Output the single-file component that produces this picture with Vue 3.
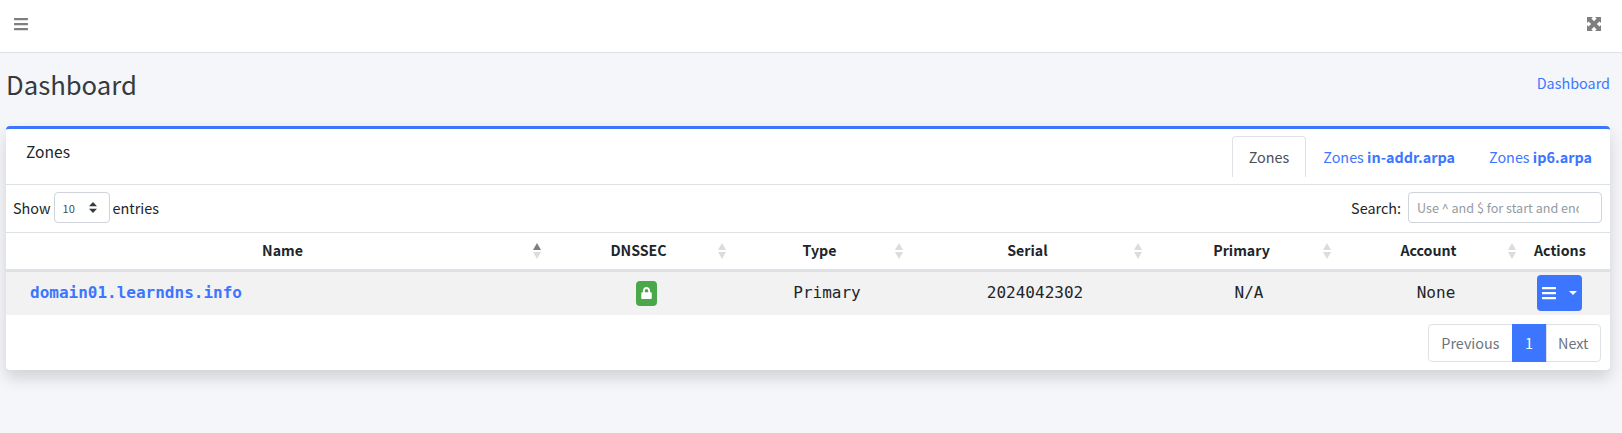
<script setup>
const columns = [
  { name: 'Name', width: 541, sort: 'asc' },
  { name: 'DNSSEC', width: 185 },
  { name: 'Type', width: 177 },
  { name: 'Serial', width: 239 },
  { name: 'Primary', width: 189 },
  { name: 'Account', width: 185 },
  { name: 'Actions', width: 88, fixed: true },
]
</script>

<template>
  <div class="page">
    <nav class="navbar">
      <svg class="nav-icon" viewBox="0 0 448 512" aria-hidden="true"><path d="M16 132h416c8.800 0 16-7.200 16-16V76c0-8.800-7.200-16-16-16H16C7.200 60 0 67.200 0 76v40c0 8.800 7.200 16 16 16zm0 160h416c8.800 0 16-7.200 16-16v-40c0-8.800-7.200-16-16-16H16c-8.800 0-16 7.200-16 16v40c0 8.800 7.200 16 16 16zm0 160h416c8.800 0 16-7.200 16-16v-40c0-8.800-7.200-16-16-16H16c-8.800 0-16 7.200-16 16v40c0 8.800 7.200 16 16 16z"/></svg>
      <svg class="nav-icon expand" viewBox="0 0 14 14" aria-hidden="true"><path d="M0 0h6L4.400 1.600 7 4.200 9.600 1.600 8 0h6v6l-1.600-1.600L9.800 7l2.600 2.600L14 8v6H8l1.600-1.600L7 9.800l-2.600 2.600L6 14H0V8l1.600 1.600L4.200 7 1.600 4.400 0 6z"/></svg>
    </nav>

    <header class="content-header">
      <h1>Dashboard</h1>
      <a class="link" href="#">Dashboard</a>
    </header>

    <section class="card">
      <div class="card-header">
        <h3>Zones</h3>
        <ul class="tabs">
          <li class="tab active">Zones</li>
          <li class="tab">Zones <b>in-addr.arpa</b></li>
          <li class="tab">Zones <b>ip6.arpa</b></li>
        </ul>
      </div>

      <div class="filters">
        <label class="length">
          Show
          <span class="select">
            <span>10</span>
            <svg viewBox="0 0 8 11" aria-hidden="true"><path d="M4 0l4 4.300H0zM4 11L0 6.700h8z"/></svg>
          </span>
          entries
        </label>
        <label class="search">
          Search:
          <input type="text" placeholder="Use ^ and $ for start and end" />
        </label>
      </div>

      <table>
        <colgroup>
          <col v-for="c in columns" :key="c.name" :style="{ width: c.width + 'px' }" />
        </colgroup>
        <thead>
          <tr>
            <th v-for="c in columns" :key="c.name">
              {{ c.name }}
              <span v-if="!c.fixed" class="sort" :class="{ asc: c.sort === 'asc' }"></span>
            </th>
          </tr>
        </thead>
        <tbody>
          <tr>
            <td class="zone"><a href="#">domain01.learndns.info</a></td>
            <td>
              <span class="badge">
                <svg viewBox="0 0 448 512" aria-hidden="true"><path d="M400 224h-24v-72C376 68.200 307.800 0 224 0S72 68.200 72 152v72H48c-26.500 0-48 21.500-48 48v192c0 26.500 21.500 48 48 48h352c26.500 0 48-21.500 48-48V272c0-26.500-21.500-48-48-48zm-104 0H152v-72c0-39.700 32.300-72 72-72s72 32.300 72 72v72z"/></svg>
              </span>
            </td>
            <td>Primary</td>
            <td>2024042302</td>
            <td>N/A</td>
            <td>None</td>
            <td>
              <button class="action" type="button">
                <svg viewBox="0 0 448 512" aria-hidden="true"><path d="M16 132h416c8.800 0 16-7.200 16-16V76c0-8.800-7.200-16-16-16H16C7.200 60 0 67.200 0 76v40c0 8.800 7.200 16 16 16zm0 160h416c8.800 0 16-7.200 16-16v-40c0-8.800-7.200-16-16-16H16c-8.800 0-16 7.200-16 16v40c0 8.800 7.200 16 16 16zm0 160h416c8.800 0 16-7.200 16-16v-40c0-8.800-7.200-16-16-16H16c-8.800 0-16 7.200-16 16v40c0 8.800 7.200 16 16 16z"/></svg>
                <span class="caret"></span>
              </button>
            </td>
          </tr>
        </tbody>
      </table>

      <div class="pager-row">
        <div class="pager">
          <span class="page-item">Previous</span>
          <span class="page-item current">1</span>
          <span class="page-item">Next</span>
        </div>
      </div>
    </section>
  </div>
</template>

<style>
html, body { margin: 0; background: #f4f6f9; }
</style>

<style scoped>
.page {
  min-height: 433px;
  box-sizing: border-box;
  background: #f4f6f9;
  color: #212529;
  font: 400 14.4px/24px "Noto Sans CJK SC", "Noto Sans", sans-serif;
}
.navbar {
  height: 52px;
  padding: 0 21px 0 14px;
  display: flex;
  align-items: center;
  justify-content: space-between;
  background: #fff;
  border-bottom: 1px solid #dee2e6;
}
.nav-icon { width: 14px; height: 16px; margin-top: -4px; fill: rgba(0, 0, 0, .5); }
.expand { height: 14px; margin-top: -4px; }
.content-header {
  height: 61px;
  padding: 0 12px 12px 6px;
  display: flex;
  align-items: center;
  justify-content: space-between;
}
h1 { margin: 0; font-size: 25.7px; line-height: 34px; font-weight: 400; color: #343a40; }
.link { color: #3c76ff; text-decoration: none; position: relative; top: -1px; }
.card {
  margin: 0 12px 0 6px;
  background: #fff;
  border-top: 3px solid #3c76ff;
  border-radius: 4px;
  box-shadow: 0 8px 16px rgba(0, 0, 0, .15);
}
.card-header {
  height: 55px;
  padding: 0 1px 0 20px;
  display: flex;
  justify-content: space-between;
  border-bottom: 1px solid #dee2e6;
}
h3 { margin: 9px 0 0; font-size: 15.6px; line-height: 26px; font-weight: 400; }
.tabs { list-style: none; margin: 7px 0 0; padding: 0; display: flex; height: 41px; }
.tab {
  box-sizing: border-box;
  height: 41px;
  padding: 0 16px;
  line-height: 40px;
  color: #3c76ff;
  white-space: nowrap;
  border: 1px solid transparent;
  border-bottom: 0;
  border-radius: 4px 4px 0 0;
}
.tab.active { color: #495057; border-color: #dee2e6; }
.filters {
  height: 48px;
  padding: 0 8px 2px 7px;
  box-sizing: border-box;
  display: flex;
  align-items: center;
  justify-content: space-between;
  border-bottom: 1px solid #dee2e6;
}
.length, .search { display: flex; align-items: center; gap: 3px; }
.search { gap: 7px; }
.select {
  box-sizing: border-box;
  width: 56px;
  height: 31px;
  padding: 0 12px 0 8px;
  display: flex;
  align-items: center;
  justify-content: space-between;
  font-size: 11px;
  color: #495057;
  border: 1px solid #ced4da;
  border-radius: 4px;
}
.select svg { width: 8px; height: 11px; fill: #343a40; }
input {
  box-sizing: border-box;
  width: 194px;
  height: 31px;
  padding: 0 22px 0 8px;
  font: inherit;
  font-size: 12.6px;
  color: #495057;
  border: 1px solid #ced4da;
  border-radius: 4px;
  outline: 0;
}
input::placeholder { color: #939ba2; opacity: 1; }
table { width: 1604px; table-layout: fixed; border-collapse: collapse; }
th {
  position: relative;
  height: 37px;
  box-sizing: border-box;
  padding: 0 14px 2px 12px;
  text-align: center;
  font-size: 14.2px;
  font-weight: 700;
  border-bottom: 3px solid #dee2e6;
}
.sort { position: absolute; right: 6px; top: 10px; width: 8px; height: 16px; }
.sort::before, .sort::after {
  content: "";
  position: absolute;
  left: 0;
  border-left: 4px solid transparent;
  border-right: 4px solid transparent;
}
.sort::before { top: 0; border-bottom: 7px solid #dcdcdc; }
.sort::after { bottom: 0; border-top: 7px solid #dcdcdc; }
.sort.asc::before { border-bottom-color: #7f7f7f; }
td {
  height: 45px;
  box-sizing: border-box;
  padding: 0 12px 0 25px;
  text-align: center;
  background: #f2f2f2;
  font-family: "DejaVu Sans Mono", "Liberation Mono", monospace;
  font-size: 16px;
}
th:first-child, td:first-child { padding-left: 24px; }
th:first-child { padding-right: 12px; }
th:last-child, td:last-child { padding-left: 12px; padding-right: 26px; }
.zone { text-align: left; font-weight: 700; }
.zone a { color: #3c76ff; text-decoration: none; }
.badge {
  display: inline-flex;
  align-items: center;
  justify-content: center;
  width: 21px;
  height: 25px;
  vertical-align: middle;
  background: #4aa84a;
  border-radius: 4px;
}
.badge svg { width: 11px; height: 12px; fill: #fff; }
.action {
  box-sizing: border-box;
  width: 45px;
  height: 36px;
  padding: 0 0 0 5px;
  display: inline-flex;
  align-items: center;
  vertical-align: middle;
  background: #3c76ff;
  border: 0;
  border-radius: 4px;
}
.action svg { width: 14px; height: 16px; fill: #fff; }
.caret {
  margin-left: 13px;
  border-top: 4.800px solid #fff;
  border-left: 4.800px solid transparent;
  border-right: 4.800px solid transparent;
}
.pager-row { padding: 9px 9px 8px 0; display: flex; justify-content: flex-end; }
.pager { display: flex; height: 38px; }
.page-item {
  box-sizing: border-box;
  padding: 0 12px;
  line-height: 36px;
  color: #6c757d;
  background: #fff;
  border: 1px solid #dee2e6;
  margin-left: -1px;
}
.page-item:first-child { border-radius: 4px 0 0 4px; }
.page-item:last-child { padding: 0 11.5px; border-radius: 0 4px 4px 0; }
.page-item.current { padding: 0 12.5px; color: #fff; background: #3c76ff; border-color: #3c76ff; }
</style>
